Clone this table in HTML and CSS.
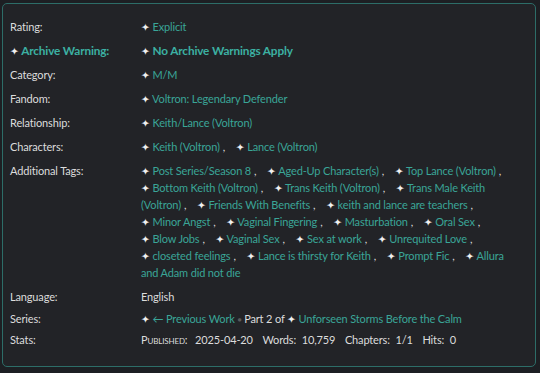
FILE: index.html
```html
<!DOCTYPE html>
<html>
<head>
<meta charset="utf-8">
<link rel="stylesheet" href="styles.css">
</head>
<body>
<div class="meta">
  <dl class="grid">
    <dt>Rating:</dt>
    <dd><span class="tag"><span class="star">✦</span>&nbsp;<a>Explicit</a></span></dd>

    <dt class="warn"><span class="star">✦</span>&nbsp;Archive Warning:</dt>
    <dd class="warn"><span class="tag"><span class="star">✦</span>&nbsp;<a>No Archive Warnings Apply</a></span></dd>

    <dt>Category:</dt>
    <dd><span class="tag"><span class="star">✦</span>&nbsp;<a>M/M</a></span></dd>

    <dt>Fandom:</dt>
    <dd><span class="tag"><span class="star">✦</span>&nbsp;<a>Voltron: Legendary Defender</a></span></dd>

    <dt>Relationship:</dt>
    <dd><span class="tag"><span class="star">✦</span>&nbsp;<a>Keith/Lance (Voltron)</a></span></dd>

    <dt>Characters:</dt>
    <dd><span class="tag"><span class="star">✦</span>&nbsp;<a>Keith (Voltron)</a><span class="comma">,</span></span> <span class="tag"><span class="star">✦</span>&nbsp;<a>Lance (Voltron)</a></span></dd>

    <dt>Additional Tags:</dt>
    <dd><span class="tag"><span class="star">✦</span>&nbsp;<a>Post Series/Season 8</a><span class="comma">,</span></span> <span class="tag"><span class="star">✦</span>&nbsp;<a>Aged-Up Character(s)</a><span class="comma">,</span></span> <span class="tag"><span class="star">✦</span>&nbsp;<a>Top Lance (Voltron)</a><span class="comma">,</span></span> <span class="tag"><span class="star">✦</span>&nbsp;<a>Bottom Keith (Voltron)</a><span class="comma">,</span></span> <span class="tag"><span class="star">✦</span>&nbsp;<a>Trans Keith (Voltron)</a><span class="comma">,</span></span> <span class="tag"><span class="star">✦</span>&nbsp;<a>Trans Male Keith (Voltron)</a><span class="comma">,</span></span> <span class="tag"><span class="star">✦</span>&nbsp;<a>Friends With Benefits</a><span class="comma">,</span></span> <span class="tag"><span class="star">✦</span>&nbsp;<a>keith and lance are teachers</a><span class="comma">,</span></span> <span class="tag"><span class="star">✦</span>&nbsp;<a>Minor Angst</a><span class="comma">,</span></span> <span class="tag"><span class="star">✦</span>&nbsp;<a>Vaginal Fingering</a><span class="comma">,</span></span> <span class="tag"><span class="star">✦</span>&nbsp;<a>Masturbation</a><span class="comma">,</span></span> <span class="tag"><span class="star">✦</span>&nbsp;<a>Oral Sex</a><span class="comma">,</span></span> <span class="tag"><span class="star">✦</span>&nbsp;<a>Blow Jobs</a><span class="comma">,</span></span> <span class="tag"><span class="star">✦</span>&nbsp;<a>Vaginal Sex</a><span class="comma">,</span></span> <span class="tag"><span class="star">✦</span>&nbsp;<a>Sex at work</a><span class="comma">,</span></span> <span class="tag"><span class="star">✦</span>&nbsp;<a>Unrequited Love</a><span class="comma">,</span></span> <span class="tag"><span class="star">✦</span>&nbsp;<a>closeted feelings</a><span class="comma">,</span></span> <span class="tag"><span class="star">✦</span>&nbsp;<a>Lance is thirsty for Keith</a><span class="comma">,</span></span> <span class="tag"><span class="star">✦</span>&nbsp;<a>Prompt Fic</a><span class="comma">,</span></span> <span class="tag"><span class="star">✦</span>&nbsp;<a>Allura and Adam did not die</a></span></dd>

    <dt class="lang">Language:</dt>
    <dd class="lang">English</dd>

    <dt class="series">Series:</dt>
    <dd class="series"><span class="star">✦</span>&nbsp;<a>← Previous Work</a> <span class="dot">●</span> Part 2 of <span class="star">✦</span>&nbsp;<a>Unforseen Storms Before the Calm</a></dd>

    <dt class="stats">Stats:</dt>
    <dd class="stats"><span class="sc">Published:</span> <span class="val">2025-04-20</span> <span class="lbl">Words:</span> <span class="val">10,759</span> <span class="lbl">Chapters:</span> <span class="val">1/1</span> <span class="lbl">Hits:</span> <span class="val">0</span></dd>
  </dl>
</div>
</body>
</html>
```
FILE: styles.css
```css
html, body {
  margin: 0;
  padding: 0;
  background: #1d1f23;
}
body {
  padding: 3px 4px 4px 2px;
  font-family: Lato, "Open Sans", sans-serif;
  font-size: 11px;
  letter-spacing: -0.15px;
  color: #dcdcdc;
}
.meta {
  background: #222327;
  border: 1px solid #2d6d68;
  border-radius: 5px;
  padding: 14px 24px 18px 7px;
}
.grid {
  display: grid;
  grid-template-columns: 131px 1fr;
  row-gap: 7px;
  margin: 0;
  line-height: 17px;
}
dt, dd {
  margin: 0;
}
a {
  color: #3aa597;
}
.star {
  color: #f0f0f0;
  font-family: "DejaVu Sans", sans-serif;
  font-size: 10.5px;
  line-height: 1;
  letter-spacing: 0;
}
.comma {
  margin: 0 8px 0 3px;
  color: #dcdcdc;
}
.warn {
  font-weight: bold;
  font-size: 11.8px;
  color: #3cb0a2;
}
.warn a {
  color: #3cb0a2;
}
.series {
  margin-top: -2px;
}
.stats {
  margin-top: -3px;
}
.dot {
  color: #5a5a5a;
  font-size: 7px;
  line-height: 1;
  vertical-align: 1px;
}
.sc {
  font-variant: small-caps;
  margin-right: 5px;
}
.stats .lbl {
  margin-left: 7px;
  margin-right: 3px;
}
```
